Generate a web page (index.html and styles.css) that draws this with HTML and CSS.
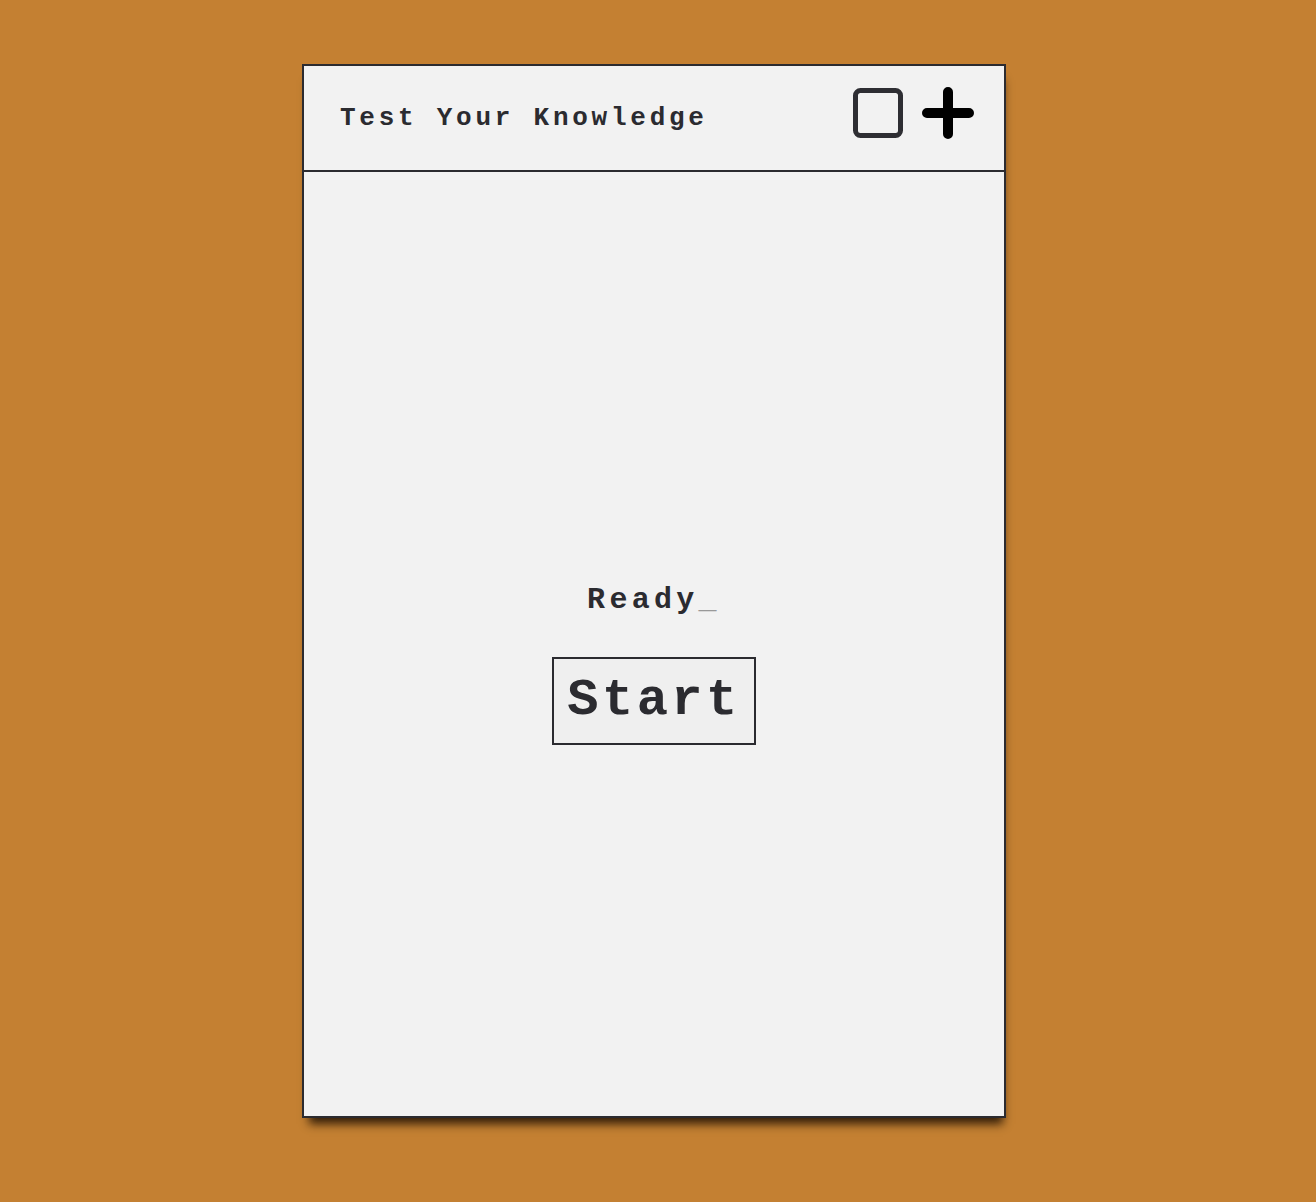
FILE: index.html
```html
<!DOCTYPE html>
<html>
<head>
<meta charset="utf-8">
<link rel="stylesheet" href="styles.css">
</head>
<body>
<div class="card">
  <header class="bar">
    <h1 class="title">Test Your Knowledge</h1>
    <div class="icons">
      <svg class="ico" width="52" height="52" viewBox="0 0 52 52"><rect x="3.5" y="3.5" width="45" height="45" rx="5" fill="none" stroke="#2e2e33" stroke-width="5"/></svg>
      <svg class="ico" width="52" height="52" viewBox="0 0 52 52"><path d="M26 5V47M5 26H47" stroke="#000" stroke-width="10" stroke-linecap="round" fill="none"/></svg>
    </div>
  </header>
  <main class="body">
    <p class="ready">Ready<span class="cursor">_</span></p>
    <button class="start">Start</button>
  </main>
</div>
</body>
</html>
```
FILE: styles.css
```css
html, body { margin: 0; padding: 0; }
body {
  background: #c48032;
  width: 1316px;
  height: 1202px;
  font-family: "Liberation Mono", "Courier New", monospace;
  color: #2b2b30;
}
.card {
  position: relative;
  margin: 64px 0 0 302px;
  width: 700px;
  height: 1050px;
  border: 2px solid #2b2b30;
  background: #f2f2f2;
  box-shadow: 2px 11px 9px -5px rgba(35, 20, 5, 0.9);
  display: flex;
  flex-direction: column;
}
.bar {
  height: 104px;
  border-bottom: 2px solid #2b2b30;
  display: flex;
  align-items: center;
  justify-content: space-between;
  padding: 0 30px 0 36px;
}
.title {
  margin: 0;
  font-size: 26px;
  font-weight: bold;
  letter-spacing: 3.75px;
}
.icons { display: flex; gap: 18px; align-items: center; margin-top: -10px; }
.ico { display: block; }
.body {
  flex: 1;
  display: flex;
  flex-direction: column;
  align-items: center;
  justify-content: center;
  padding-top: 40px;
}
.ready {
  margin: 0 0 40px 0;
  font-size: 30px;
  font-weight: bold;
  letter-spacing: 4.3px;
}
.cursor { color: #999; }
.start {
  font-family: "Liberation Mono", "Courier New", monospace;
  font-size: 52px;
  font-weight: bold;
  color: #2b2b30;
  background: #efefef;
  border: 2px solid #2b2b30;
  padding: 6px 13px;
  letter-spacing: 3.5px;
  line-height: 1.4;
}
```
